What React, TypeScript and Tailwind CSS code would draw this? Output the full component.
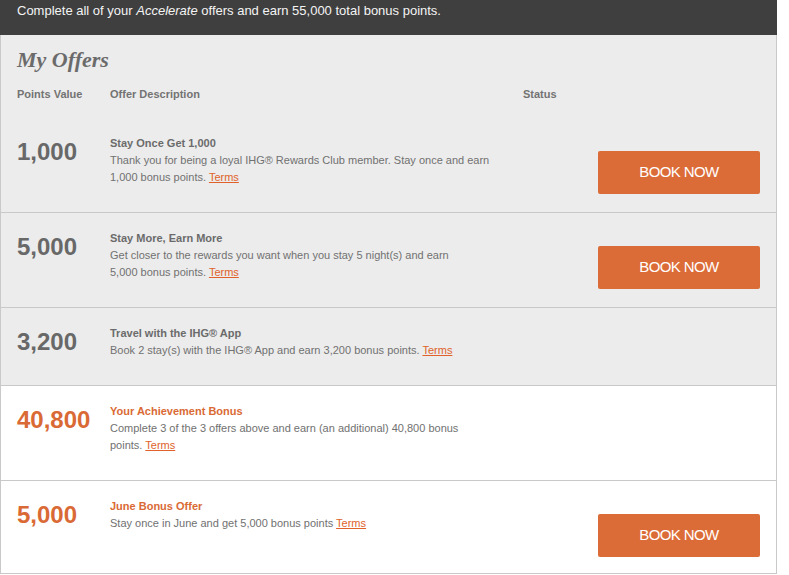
const offers = [
  {
    points: "1,000",
    title: "Stay Once Get 1,000",
    lines: ["Thank you for being a loyal IHG® Rewards Club member. Stay once and earn", "1,000 bonus points."],
    book: true,
    bonus: false,
  },
  {
    points: "5,000",
    title: "Stay More, Earn More",
    lines: ["Get closer to the rewards you want when you stay 5 night(s) and earn", "5,000 bonus points."],
    book: true,
    bonus: false,
  },
  {
    points: "3,200",
    title: "Travel with the IHG® App",
    lines: ["Book 2 stay(s) with the IHG® App and earn 3,200 bonus points."],
    book: false,
    bonus: false,
  },
  {
    points: "40,800",
    title: "Your Achievement Bonus",
    lines: ["Complete 3 of the 3 offers above and earn (an additional) 40,800 bonus", "points."],
    book: false,
    bonus: true,
  },
  {
    points: "5,000",
    title: "June Bonus Offer",
    lines: ["Stay once in June and get 5,000 bonus points"],
    book: true,
    bonus: true,
  },
];

export default function App() {
  return (
    <div className="w-[789px] h-[575px] bg-white font-['Liberation_Sans',Arial,sans-serif]">
      <div className="w-[777px]">
        {/* top banner */}
        <div className="h-[35px] bg-[#3f3f3f] pl-[17px] pt-[3px] text-[13px] leading-[16px] text-[#f4f4f4]">
          Complete all of your <i>Accelerate</i> offers and earn 55,000 total bonus points.
        </div>

        <div className="border-x border-[#c9c9c9]">
          {/* header */}
          <div className="bg-[#ececec] px-[16px] pt-[11px] pb-[15px]">
            <h2 className="font-['Liberation_Serif',Georgia,serif] text-[22px] leading-[27px] font-bold italic text-[#6b6b6b]">
              My Offers
            </h2>
            <div className="mt-[13px] flex text-[11px] leading-[17px] font-bold text-[#737373]">
              <div className="w-[93px]">Points Value</div>
              <div className="w-[413px]">Offer Description</div>
              <div>Status</div>
            </div>
          </div>

          {/* rows */}
          {offers.map((o, i) => (
            <div
              key={i}
              className={`flex min-h-[78px] px-[16px] ${o.bonus ? "bg-white" : "bg-[#ececec]"} ${i > 0 ? "border-t border-[#c9c9c9]" : ""} ${i === offers.length - 1 ? "border-b" : ""}`}
            >
              <div
                className={`w-[93px] pt-[20px] text-[24px] leading-[28px] font-bold ${o.bonus ? "text-[#da6a35]" : "text-[#686868]"}`}
              >
                {o.points}
              </div>
              <div className="w-[413px] pt-[17px] pb-[26px]">
                <p
                  className={`text-[11px] leading-[17px] font-bold ${o.bonus ? "text-[#da6a35]" : "text-[#6b6b6b]"}`}
                >
                  {o.title}
                </p>
                <p className="w-[395px] text-[11px] leading-[17px] text-[#717171]">
                  {o.lines.map((l, j) => (
                    <span key={j}>
                      {j > 0 && <br />}
                      {l}
                    </span>
                  ))}{" "}
                  <a href="#" className="text-[#e0622a] underline">
                    Terms
                  </a>
                </p>
              </div>
              <div className="flex flex-1 justify-end pt-[33px] pb-[16px]">
                {o.book && (
                  <button className="h-[43px] w-[162px] rounded-[2px] bg-[#dc6c37] text-[15px] tracking-[-0.6px] text-white">
                    BOOK NOW
                  </button>
                )}
              </div>
            </div>
          ))}
        </div>
      </div>
    </div>
  );
}
